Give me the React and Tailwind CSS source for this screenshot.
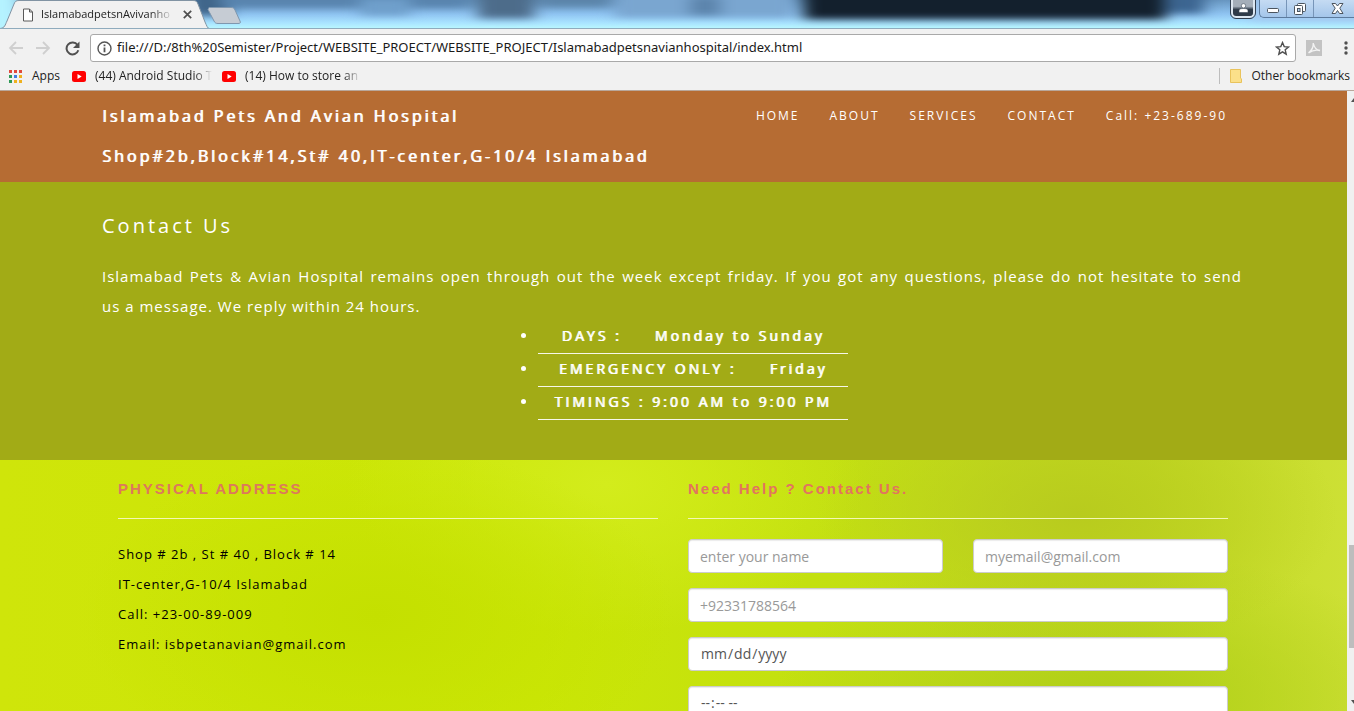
import React from "react";

const NAV = ["HOME", "ABOUT", "SERVICES", "CONTACT", "Call: +23-689-90"];

const INTRO =
  "Islamabad Pets & Avian Hospital remains open through out the week except friday. If you got any questions, please do not hesitate to send us\u00a0a message. We reply within 24 hours.";

const ADDRESS = [
  "Shop # 2b , St # 40 , Block # 14",
  "IT-center,G-10/4 Islamabad",
  "Call: +23-00-89-009",
  "Email: isbpetanavian@gmail.com",
];

const HOURS = [
  "DAYS :\u00a0\u00a0\u00a0\u00a0 Monday to Sunday",
  "EMERGENCY ONLY :\u00a0\u00a0\u00a0\u00a0 Friday",
  "TIMINGS : 9:00 AM to 9:00 PM",
];

const APP_DOTS = [
  "#e14a3b", "#e14a3b", "#e14a3b",
  "#2f9a56", "#3f7de0", "#efb11f",
  "#2f9a56", "#efb11f", "#efb11f",
];

function GlassBackdrop() {
  return (
    <svg
      className="absolute inset-0 h-full w-full"
      viewBox="0 0 1354 29"
      preserveAspectRatio="none"
      aria-hidden="true"
    >
      <defs>
        <linearGradient id="glass" x1="0" y1="0" x2="0" y2="1">
          <stop offset="0" stopColor="#6795c0" />
          <stop offset="0.5" stopColor="#8fc4f2" />
          <stop offset="0.8" stopColor="#a8e2ff" />
          <stop offset="1" stopColor="#b8f6ff" />
        </linearGradient>
        <filter id="soft" x="-10%" y="-60%" width="120%" height="220%" colorInterpolationFilters="sRGB">
          <feGaussianBlur stdDeviation="8 4" />
        </filter>
      </defs>
      <rect width="1354" height="29" fill="url(#glass)" />
      <g filter="url(#soft)">
        <rect x="-20" y="-10" width="40" height="50" fill="#b5f2ff" />
        <rect x="190" y="-10" width="40" height="26" fill="#3f6488" />
        <rect x="220" y="-12" width="250" height="20" fill="#5884ae" />
        <rect x="360" y="-2" width="50" height="18" fill="#6f9fcb" />
        <rect x="478" y="-10" width="56" height="29" fill="#4d6c8a" />
        <rect x="540" y="-12" width="70" height="19" fill="#5b84a9" />
        <rect x="615" y="-10" width="178" height="28" fill="#7aa6d0" />
        <rect x="690" y="-4" width="30" height="20" fill="#5c84ac" />
        <rect x="804" y="-14" width="362" height="34" fill="#13202d" />
        <rect x="1164" y="-14" width="40" height="28" fill="#3c6590" />
        <rect x="1250" y="-10" width="130" height="32" fill="#a5c9f0" />
      </g>
    </svg>
  );
}

function TabStrip() {
  return (
    <div className="relative flex h-[29px] shrink-0 items-start justify-between overflow-hidden border-b border-[#8fabbd]">
      <GlassBackdrop />
      <div className="relative flex items-start">
        <svg className="absolute left-0 top-0" width="250" height="29" aria-hidden="true">
          <path d="M0 28.500 C5 28 5 25 7 21 L14 4 C15 1.500 16 0.500 19 0.500 H193 C196 0.500 197 1.500 198 4 L205 22 C207 26 207 28 210 29 Z" fill="#f1f1f1" stroke="#8193a3" />
          <path d="M209 7.500 H231 C233 7.500 234 8 235 10 L240 21 C241 23 240 23.500 238 23.500 H218 C216 23.500 215 23 214 21 L208 9.500 Z" fill="#c6ccd4" stroke="#7f97ae" />
        </svg>
        <div className="relative flex h-7 items-center pl-[22px] pt-px">
          <svg width="12" height="14" viewBox="0 0 12 14" fill="#fff" stroke="#5a5a5a" aria-hidden="true">
            <path d="M1.500 1 H7.500 L10.500 4 V13 H1.500 Z M7.500 1 V4 H10.500" />
          </svg>
          <span className="ml-[7px] w-[133px] whitespace-nowrap text-[11px] text-[#222] [mask-image:linear-gradient(to_right,black_82%,transparent)]">
            IslamabadpetsnAvivanho
          </span>
          <button type="button" aria-label="Close tab" className="ml-[7px] flex size-3 items-center justify-center">
            <svg width="9" height="9" viewBox="0 0 9 9" stroke="#4f4f4f" strokeWidth="1.700" aria-hidden="true">
              <path d="M0.800 0.800 L8.200 8.200 M8.200 0.800 L0.800 8.200" />
            </svg>
          </button>
          <button type="button" aria-label="New tab" className="ml-5 h-5 w-6" />
        </div>
      </div>
      <div className="relative flex items-start">
        <button
          type="button"
          aria-label="Profile"
          className="mr-1 flex h-[18px] w-6 items-center justify-center rounded-b-[5px] border-2 border-t-0 border-[#dce6f0] bg-linear-to-b from-[#a4aeb9] from-40% to-[#2f3b49] to-60% outline outline-[#303f50]"
        >
          <svg width="11" height="10" viewBox="0 0 11 10" fill="#fff" stroke="#394756" strokeWidth="0.600" aria-hidden="true">
            <circle cx="5.500" cy="2.800" r="2.200" />
            <path d="M1 9.500 V7.500 C1 6 3 5.500 5.500 5.500 S10 6 10 7.500 V9.500 Z" />
          </svg>
        </button>
        <div className="flex h-[18px] overflow-hidden rounded-bl-[5px] border-b border-l border-[#5c7b9d] bg-linear-to-b from-[#c5dbf3] to-[#a4c6ea]">
          <button type="button" aria-label="Minimize" className="flex w-[27px] items-center justify-center border-r border-[#7795b8] pt-1">
            <svg width="12" height="5" aria-hidden="true">
              <rect x="0.500" y="0.500" width="11" height="4" rx="1" fill="#fff" stroke="#4b545e" />
            </svg>
          </button>
          <button type="button" aria-label="Restore" className="flex w-[27px] items-center justify-center border-r border-[#7795b8]">
            <svg width="12" height="12" viewBox="0 0 12 12" fill="#fff" stroke="#4b545e" aria-hidden="true">
              <rect x="3.500" y="0.500" width="8" height="8" rx="1" />
              <rect x="0.500" y="2.500" width="8" height="9" rx="1" />
              <rect x="3.500" y="5.500" width="2.500" height="3" fill="#b0cfee" />
            </svg>
          </button>
          <button type="button" aria-label="Close" className="flex w-10 items-center justify-center pl-1.5">
            <svg width="13" height="11" viewBox="0 0 13 11" fill="#fff" stroke="#4b545e" aria-hidden="true">
              <path d="M1 0.500 H4.500 L6.500 3 L8.500 0.500 H12 L8.800 5.200 L12 10.500 H8.500 L6.500 7.500 L4.500 10.500 H1 L4.200 5.200 Z" />
            </svg>
          </button>
        </div>
      </div>
    </div>
  );
}

function Toolbar() {
  return (
    <div className="flex h-[34px] shrink-0 items-center bg-[#f1f1f1] pl-2 pt-1">
      <button type="button" aria-label="Back" className="flex h-5 w-4 items-center">
        <svg width="15" height="14" viewBox="0 0 15 14" fill="none" stroke="#cfcfcf" strokeWidth="1.800" aria-hidden="true">
          <path d="M15 7 H2 M8 1 L2 7 L8 13" />
        </svg>
      </button>
      <button type="button" aria-label="Forward" className="ml-3 flex h-5 w-4 items-center">
        <svg width="15" height="14" viewBox="0 0 15 14" fill="none" stroke="#cfcfcf" strokeWidth="1.800" aria-hidden="true">
          <path d="M0 7 H13 M7 1 L13 7 L7 13" />
        </svg>
      </button>
      <button type="button" aria-label="Reload" className="ml-3 flex size-4 items-center justify-center">
        <svg width="15" height="15" viewBox="0 0 15 15" fill="none" aria-hidden="true">
          <path d="M12.500 4 A6 6 0 1 0 13.300 9.300" stroke="#505050" strokeWidth="2" />
          <path d="M14.500 0.500 V7 H8 Z" fill="#505050" />
        </svg>
      </button>
      <div className="ml-[10px] flex h-7 min-w-0 flex-1 items-center rounded-[3px] border border-[#a9a9a9] bg-white pl-1.5 pr-[5px]">
        <svg width="15" height="15" viewBox="0 0 15 15" fill="none" stroke="#555" strokeWidth="1.400" aria-hidden="true">
          <circle cx="7.500" cy="7.500" r="6.500" />
          <path d="M7.500 3.500 V5.200 M7.500 6.500 V11.300" strokeWidth="1.800" />
        </svg>
        <input
          type="text"
          aria-label="Address"
          defaultValue="file:///D:/8th%20Semister/Project/WEBSITE_PROECT/WEBSITE_PROJECT/Islamabadpetsnavianhospital/index.html"
          className="ml-[5px] min-w-0 flex-1 bg-transparent font-['Noto_Sans',sans-serif] text-[13px] text-[#1a1a1a] outline-none"
        />
        <button type="button" aria-label="Bookmark this page">
          <svg width="15" height="15" viewBox="0 0 15 15" fill="none" stroke="#4f4f4f" strokeWidth="1.400" aria-hidden="true">
            <path d="M7.500 1.600 L9.200 5.600 L13.500 6 L10.200 8.800 L11.200 13.200 L7.500 10.900 L3.800 13.200 L4.800 8.800 L1.500 6 L5.800 5.600 Z" />
          </svg>
        </button>
      </div>
      <button type="button" aria-label="PDF extension" className="ml-[10px]">
        <svg width="16" height="16" viewBox="0 0 16 16" aria-hidden="true">
          <rect width="16" height="16" fill="#c3c3c3" />
          <path d="M2.500 13 C5 11 7.500 7 7.300 3 C8 7 10 10 14 10.500 C10 9.500 6 10.500 2.500 13 Z" fill="none" stroke="#f3f3f3" strokeWidth="1.400" />
        </svg>
      </button>
      <button type="button" aria-label="Menu" className="ml-[22px] flex w-[10px] justify-start">
        <svg width="4" height="14" fill="#505050" aria-hidden="true">
          <circle cx="2" cy="2" r="1.700" />
          <circle cx="2" cy="7" r="1.700" />
          <circle cx="2" cy="12" r="1.700" />
        </svg>
      </button>
    </div>
  );
}

function VideoMark() {
  return (
    <svg width="14" height="11" viewBox="0 0 14 11" aria-hidden="true">
      <rect width="14" height="11" rx="2.500" fill="#f00" />
      <path d="M5.500 3.100 L9.700 5.500 L5.500 7.900 Z" fill="#fff" />
    </svg>
  );
}

function BookmarksBar() {
  return (
    <div className="flex h-7 shrink-0 items-center border-b border-[#b9a79b] bg-[#f1f1f1] pb-px pl-[9px] pr-1 text-xs text-[#222]">
      <a href="#apps" className="flex items-center gap-[10px]">
        <svg width="13" height="13" viewBox="0 0 13 13" aria-hidden="true">
          {APP_DOTS.map((c, i) => (
            <rect key={i} x={(i % 3) * 5} y={Math.floor(i / 3) * 5} width="3" height="3" fill={c} />
          ))}
        </svg>
        Apps
      </a>
      <a href="#android" className="ml-3 flex items-center gap-[9px]">
        <VideoMark />
        <span className="w-[117px] whitespace-nowrap [mask-image:linear-gradient(to_right,black_85%,transparent)]">
          (44) Android Studio T
        </span>
      </a>
      <a href="#store" className="ml-[10px] flex items-center gap-[9px]">
        <VideoMark />
        <span className="w-[116px] whitespace-nowrap [mask-image:linear-gradient(to_right,black_85%,transparent)]">
          (14) How to store an
        </span>
      </a>
      <a href="#other" className="ml-auto flex items-center gap-[9px] border-l border-[#bdbdbd] pl-[10px]">
        <svg width="12" height="14" viewBox="0 0 12 14" aria-hidden="true">
          <path d="M0.500 0.500 H10.500 V9 L11.500 10 V13.500 H0.500 Z" fill="#fbe08a" stroke="#e9c35c" />
        </svg>
        Other bookmarks
      </a>
    </div>
  );
}

const FIELD =
  "block h-[34px] w-full min-w-0 rounded border border-[#ccc] bg-white px-[11px] text-sm text-[#555] shadow-[inset_0_1px_1px_rgba(0,0,0,0.08)] outline-none placeholder:text-[#999] [&::-webkit-calendar-picker-indicator]:hidden";

function Site() {
  return (
    <main className="min-w-0 flex-1 overflow-hidden bg-[#cbe30c]">
      <header className="bg-[#b66c33] pb-[6px] pr-[3px] pt-[5px] text-white">
        <div className="mx-auto flex max-w-[1140px] items-start justify-between">
          <h1 className="text-base font-normal leading-10 tracking-[3px] [text-shadow:1px_0_0_currentColor]">
            Islamabad Pets And Avian Hospital
            <br />
            Shop#2b,Block#14,St# 40,IT-center,G-10/4 Islamabad
          </h1>
          <nav className="flex gap-[30px] pr-[15px] text-xs leading-10 tracking-[2px]">
            {NAV.map((n) => (
              <a key={n} href="#nav">
                {n}
              </a>
            ))}
          </nav>
        </div>
      </header>

      <section className="bg-[#a2ab16] pb-10 pr-[3px] pt-[29px] text-white">
        <div className="mx-auto max-w-[1140px]">
          <h2 className="text-xl leading-[30px] tracking-[3px]">Contact Us</h2>
          <p className="mt-5 text-justify text-[15px] leading-[30px] tracking-[1px]">{INTRO}</p>
          <ul className="mx-auto w-[352px] list-disc pl-[42px] text-center text-sm tracking-[3px] [text-shadow:1px_0_0_currentColor]">
            {HOURS.map((h) => (
              <li key={h} className="border-b border-white/90 pb-0.5 leading-[30px]">
                {h}
              </li>
            ))}
          </ul>
        </div>
      </section>

      <section className="bg-[radial-gradient(ellipse_260px_140px_at_80%_18%,#b8cb1e_0%,transparent_100%),radial-gradient(ellipse_330px_150px_at_82%_80%,#b0cf18_0%,transparent_100%),radial-gradient(ellipse_300px_170px_at_28%_52%,#c4e000_0%,transparent_100%),radial-gradient(ellipse_260px_150px_at_45%_8%,#d3ec1c_0%,transparent_100%),linear-gradient(to_right,#cfe50a_0%,#cbe706_40%,#c3e010_60%,#c2da22_85%,#cde035_100%)] pb-10 pr-px pt-[14px]">
        <div className="mx-auto grid max-w-[1110px] grid-cols-2 gap-[30px]">
          <div>
            <h3 className="border-b border-[#f3f7b5] pb-[14px] font-['Liberation_Sans',sans-serif] text-[15px] font-bold leading-[30px] tracking-[2px] text-[#dd785c]">
              PHYSICAL ADDRESS
            </h3>
            <address className="mt-5 text-[13px] not-italic leading-[30px] tracking-[1px] text-black">
              {ADDRESS.map((a) => (
                <p key={a}>{a}</p>
              ))}
            </address>
          </div>
          <div>
            <h3 className="border-b border-[#f3f7b5] pb-[14px] font-['Liberation_Sans',sans-serif] text-[15px] font-bold leading-[30px] tracking-[2px] text-[#e2745f]">
              Need Help ? Contact Us.
            </h3>
            <form className="mt-5 grid grid-cols-2 gap-x-[30px] gap-y-[15px]">
              <input type="text" aria-label="Name" placeholder="enter your name" className={FIELD} />
              <input type="email" aria-label="Email" placeholder="myemail@gmail.com" className={FIELD} />
              <input type="tel" aria-label="Phone" placeholder="+92331788564" className={`${FIELD} col-span-2`} />
              <input type="date" aria-label="Date" className={`${FIELD} col-span-2`} />
              <input type="time" aria-label="Time" className={`${FIELD} col-span-2`} />
            </form>
          </div>
        </div>
      </section>
    </main>
  );
}

function ScrollTrack() {
  return (
    <div className="flex w-[7px] shrink-0 flex-col justify-between bg-[#f0f0f0] pl-0.5" aria-hidden="true">
      <svg width="5" height="16" fill="#505050">
        <path d="M5 7 L2 11 H5 Z" />
      </svg>
      <div className="flex flex-1 flex-col">
        <div className="grow-[438]" />
        <div className="h-[103px] bg-[#bdbdbd]" />
        <div className="grow-[47]" />
      </div>
      <svg width="5" height="16" fill="#505050">
        <path d="M5 9 L2 5 H5 Z" />
      </svg>
    </div>
  );
}

export default function App() {
  return (
    <div className="flex h-screen flex-col overflow-hidden bg-[#f1f1f1] font-['Open_Sans',sans-serif]">
      <TabStrip />
      <Toolbar />
      <BookmarksBar />
      <div className="flex min-h-0 flex-1">
        <Site />
        <ScrollTrack />
      </div>
    </div>
  );
}
